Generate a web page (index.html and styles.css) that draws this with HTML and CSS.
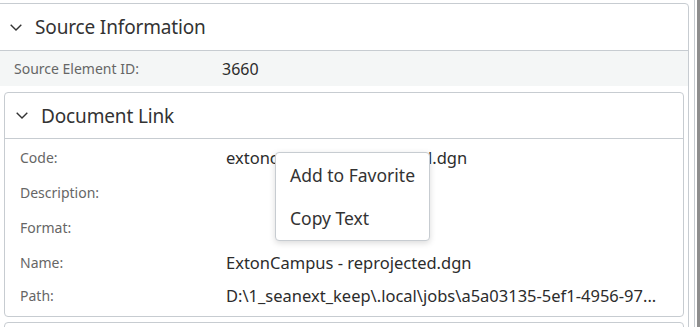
FILE: index.html
```html
<!DOCTYPE html>
<html>
<head>
<meta charset="utf-8">
<link rel="stylesheet" href="styles.css">
</head>
<body>
<div class="page">
  <div class="panel">
    <div class="card outer">
      <div class="card-header">
        <svg class="chev" viewBox="0 0 12 7" width="12" height="7"><path d="M0.7 0.7 L6 6 L11.3 0.7" fill="none" stroke="#333" stroke-width="1.4"/></svg>
        <span class="title">Source Information</span>
      </div>
      <div class="row shaded">
        <span class="label">Source Element ID:</span>
        <span class="value">3660</span>
      </div>
      <div class="card inner">
        <div class="card-header">
          <svg class="chev" viewBox="0 0 12 7" width="12" height="7"><path d="M0.7 0.7 L6 6 L11.3 0.7" fill="none" stroke="#333" stroke-width="1.4"/></svg>
          <span class="title">Document Link</span>
        </div>
        <div class="rows">
          <div class="row"><span class="label">Code:</span><span class="value">extoncampus - reproj_final.dgn</span></div>
          <div class="row"><span class="label">Description:</span><span class="value"></span></div>
          <div class="row"><span class="label">Format:</span><span class="value"></span></div>
          <div class="row"><span class="label">Name:</span><span class="value">ExtonCampus - reprojected.dgn</span></div>
          <div class="row"><span class="label">Path:</span><span class="value">D:\1_seanext_keep\.local\jobs\a5a03135-5ef1-4956-97...</span></div>
        </div>
      </div>
      <div class="card inner next"></div>
    </div>
  </div>
  <div class="scrollbar">
    <div class="sb-line"></div>
    <div class="sb-thumb"></div>
  </div>
  <div class="menu">
    <div class="menu-item">Add to Favorite</div>
    <div class="menu-item">Copy Text</div>
  </div>
</div>
</body>
</html>
```
FILE: styles.css
```css
html, body {
  margin: 0;
  padding: 0;
  background: #fff;
  overflow: hidden;
}
body {
  font-family: "Noto Sans", "Open Sans", sans-serif;
  color: #333;
  width: 700px;
  height: 327px;
}
.page {
  position: relative;
  display: flex;
  width: 700px;
  height: 327px;
  overflow: hidden;
}
.panel {
  width: 689px;
  flex: none;
  padding-top: 3px;
  box-sizing: border-box;
}
.card {
  border: 1px solid #c7ccd1;
  border-radius: 4px;
  background: #fff;
}
.outer {
  margin-left: -6px;
}
.outer > .card-header {
  height: 47px;
  padding-left: 15px;
}
.card-header {
  display: flex;
  align-items: center;
  border-bottom: 1px solid #c7ccd1;
  box-sizing: border-box;
}
.chev {
  flex: none;
  margin-right: 13px;
}
.title {
  font-size: 19px;
  color: #333;
  letter-spacing: -0.15px;
}
.row {
  display: flex;
  align-items: center;
  height: 35px;
}
.shaded {
  background: #f4f6f6;
  padding-left: 19px;
}
.label {
  flex: none;
  width: 208px;
  font-size: 14px;
  color: #666;
}
.value {
  font-size: 16.5px;
  color: #2c2c2c;
  min-width: 0;
  white-space: nowrap;
}
.shaded .value {
  font-size: 16px;
}
.inner {
  margin: 6px 4px 0 9px;
}
.inner > .card-header {
  height: 46px;
  padding-left: 11px;
}
.rows {
  padding: 1px 0 6px 15px;
}
.rows .label {
  width: 206px;
}
.rows .row:last-child {
  height: 30px;
}
.next {
  height: 20px;
  margin-top: 5px;
}
.scrollbar {
  flex: 1;
  display: flex;
  justify-content: flex-end;
}
.sb-line {
  width: 1px;
  background: #c7ccd1;
  margin-right: 2px;
}
.sb-thumb {
  width: 3px;
  background: #8e8e8e;
}
.menu {
  position: absolute;
  left: 275px;
  top: 152px;
  width: 155px;
  height: 89px;
  box-sizing: border-box;
  border: 1px solid #c7ccd1;
  border-radius: 4px;
  background: #fff;
  box-shadow: 0 2px 6px rgba(0,0,0,0.15);
  display: flex;
  flex-direction: column;
}
.menu-item {
  height: 43px;
  display: flex;
  align-items: center;
  padding-left: 14px;
  font-size: 17.5px;
  color: #333;
}
```
